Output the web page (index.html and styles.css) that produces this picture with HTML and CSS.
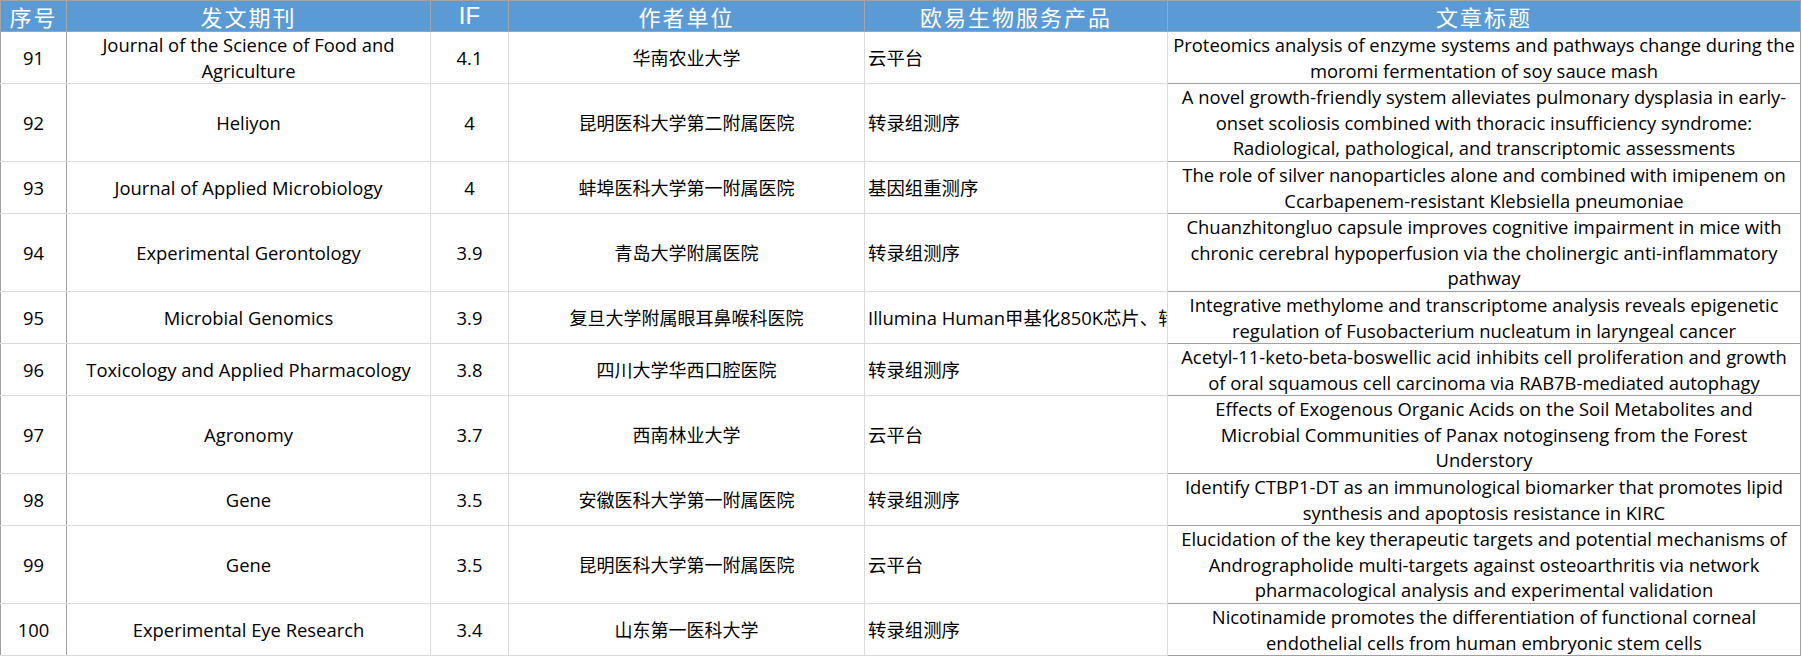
FILE: index.html
```html
<!DOCTYPE html>
<html lang="zh-CN">
<head>
<meta charset="utf-8">
<title>文章列表</title>
<link rel="stylesheet" href="styles.css">
</head>
<body>
<table class="sheet">
  <colgroup>
    <col class="c-no">
    <col class="c-journal">
    <col class="c-if">
    <col class="c-unit">
    <col class="c-product">
    <col class="c-title">
  </colgroup>
  <thead>
    <tr class="head">
      <th class="h-cjk">序号</th>
      <th class="h-cjk">发文期刊</th>
      <th class="h-if">IF</th>
      <th class="h-cjk">作者单位</th>
      <th class="h-cjk">欧易生物服务产品</th>
      <th class="h-cjk">文章标题</th>
    </tr>
  </thead>
  <tbody>
    <tr class="r2">
      <td class="no">91</td>
      <td class="journal">Journal of the Science of Food and<br>Agriculture</td>
      <td class="if">4.1</td>
      <td class="unit">华南农业大学</td>
      <td class="product"><div class="clip">云平台</div></td>
      <td class="title">Proteomics analysis of enzyme systems and pathways change during the<br>moromi fermentation of soy sauce mash</td>
    </tr>
    <tr class="r3">
      <td class="no">92</td>
      <td class="journal">Heliyon</td>
      <td class="if">4</td>
      <td class="unit">昆明医科大学第二附属医院</td>
      <td class="product"><div class="clip">转录组测序</div></td>
      <td class="title">A novel growth-friendly system alleviates pulmonary dysplasia in early-<br>onset scoliosis combined with thoracic insufficiency syndrome:<br>Radiological, pathological, and transcriptomic assessments</td>
    </tr>
    <tr class="r2">
      <td class="no">93</td>
      <td class="journal">Journal of Applied Microbiology</td>
      <td class="if">4</td>
      <td class="unit">蚌埠医科大学第一附属医院</td>
      <td class="product"><div class="clip">基因组重测序</div></td>
      <td class="title">The role of silver nanoparticles alone and combined with imipenem on<br>Ccarbapenem-resistant Klebsiella pneumoniae</td>
    </tr>
    <tr class="r3">
      <td class="no">94</td>
      <td class="journal">Experimental Gerontology</td>
      <td class="if">3.9</td>
      <td class="unit">青岛大学附属医院</td>
      <td class="product"><div class="clip">转录组测序</div></td>
      <td class="title">Chuanzhitongluo capsule improves cognitive impairment in mice with<br>chronic cerebral hypoperfusion via the cholinergic anti-inflammatory<br>pathway</td>
    </tr>
    <tr class="r2">
      <td class="no">95</td>
      <td class="journal">Microbial Genomics</td>
      <td class="if">3.9</td>
      <td class="unit">复旦大学附属眼耳鼻喉科医院</td>
      <td class="product"><div class="clip">Illumina Human甲基化850K芯片、转录组测序</div></td>
      <td class="title">Integrative methylome and transcriptome analysis reveals epigenetic<br>regulation of Fusobacterium nucleatum in laryngeal cancer</td>
    </tr>
    <tr class="r2">
      <td class="no">96</td>
      <td class="journal">Toxicology and Applied Pharmacology</td>
      <td class="if">3.8</td>
      <td class="unit">四川大学华西口腔医院</td>
      <td class="product"><div class="clip">转录组测序</div></td>
      <td class="title">Acetyl-11-keto-beta-boswellic acid inhibits cell proliferation and growth<br>of oral squamous cell carcinoma via RAB7B-mediated autophagy</td>
    </tr>
    <tr class="r3">
      <td class="no">97</td>
      <td class="journal">Agronomy</td>
      <td class="if">3.7</td>
      <td class="unit">西南林业大学</td>
      <td class="product"><div class="clip">云平台</div></td>
      <td class="title">Effects of Exogenous Organic Acids on the Soil Metabolites and<br>Microbial Communities of Panax notoginseng from the Forest<br>Understory</td>
    </tr>
    <tr class="r2">
      <td class="no">98</td>
      <td class="journal">Gene</td>
      <td class="if">3.5</td>
      <td class="unit">安徽医科大学第一附属医院</td>
      <td class="product"><div class="clip">转录组测序</div></td>
      <td class="title">Identify CTBP1-DT as an immunological biomarker that promotes lipid<br>synthesis and apoptosis resistance in KIRC</td>
    </tr>
    <tr class="r3">
      <td class="no">99</td>
      <td class="journal">Gene</td>
      <td class="if">3.5</td>
      <td class="unit">昆明医科大学第一附属医院</td>
      <td class="product"><div class="clip">云平台</div></td>
      <td class="title">Elucidation of the key therapeutic targets and potential mechanisms of<br>Andrographolide multi-targets against osteoarthritis via network<br>pharmacological analysis and experimental validation</td>
    </tr>
    <tr class="r2">
      <td class="no">100</td>
      <td class="journal">Experimental Eye Research</td>
      <td class="if">3.4</td>
      <td class="unit">山东第一医科大学</td>
      <td class="product"><div class="clip">转录组测序</div></td>
      <td class="title">Nicotinamide promotes the differentiation of functional corneal<br>endothelial cells from human embryonic stem cells</td>
    </tr>
  </tbody>
</table>
</body>
</html>
```
FILE: styles.css
```css
html, body {
  margin: 0;
  padding: 0;
  background: #ffffff;
}

.sheet {
  border-collapse: collapse;
  table-layout: fixed;
  width: 1800px;
  font-family: "Open Sans", "Noto Sans CJK SC", sans-serif;
  font-size: 18.4px;
  line-height: 25.5px;
  color: #000000;
  border: 1px solid #a0a0a0;
}

.c-no { width: 66px; }
.c-journal { width: 364px; }
.c-if { width: 78px; }
.c-unit { width: 356px; }
.c-product { width: 303px; }
.c-title { width: 633px; }

/* header */
.head th {
  background: #5b9bd5;
  color: #ffffff;
  font-weight: normal;
  padding: 0;
  height: 30px;
  line-height: 28px;
  text-align: center;
  vertical-align: middle;
  border: 1px solid #a3a3a3;
  white-space: nowrap;
  overflow: hidden;
}
.h-cjk {
  font-family: "Noto Sans CJK SC", sans-serif;
  font-size: 22px;
  letter-spacing: 2px;
  font-weight: 300;
}
.h-if {
  font-family: "Liberation Sans", sans-serif;
  font-size: 24px;
}

/* body cells */
tbody td {
  padding: 0 2px;
  text-align: center;
  vertical-align: middle;
  border: 1px solid #dadada;
  white-space: nowrap;
  overflow: hidden;
}
.r2 td { height: 51px; }
.r3 td { height: 77px; }

tbody td.no {
  border-left: 1px solid #a0a0a0;
  border-right: 1px solid #a0a0a0;
}
tbody td.unit {
  font-family: "Noto Sans CJK SC", sans-serif;
  font-size: 18px;
}
tbody td.product {
  text-align: left;
  padding: 0 0 0 3px;
}
.clip {
  overflow: hidden;
  white-space: nowrap;
  width: 299px;
}
tbody td.title {
  border: 1px solid #a0a0a0;
  padding: 0;
}
```
